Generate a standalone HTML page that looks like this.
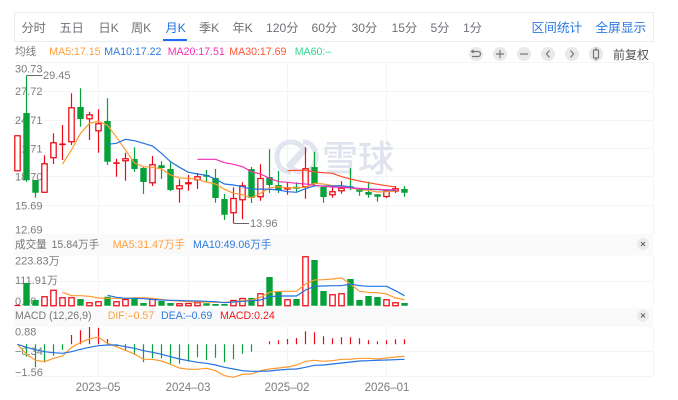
<!DOCTYPE html>
<html><head><meta charset="utf-8"><style>
html,body{margin:0;padding:0;background:#fff;width:678px;height:400px;overflow:hidden}
svg{display:block}
text{font-family:"Liberation Sans","Noto Sans CJK SC",sans-serif}
</style></head><body>
<svg width="678" height="400" viewBox="0 0 678 400" xmlns="http://www.w3.org/2000/svg">
<rect x="14.5" y="12.5" width="639" height="29" fill="#fff" stroke="#e9ebf0"/>
<g font-size="12.2" fill="#6e7176">
<text x="21.5" y="32">分时</text><text x="59.5" y="32">五日</text><text x="98.5" y="32">日K</text><text x="131" y="32">周K</text>
<text x="165.5" y="32" fill="#2272e0">月K</text><text x="199" y="32">季K</text><text x="232.5" y="32">年K</text>
<text x="266" y="32">120分</text><text x="311.5" y="32">60分</text><text x="351.5" y="32">30分</text><text x="391.5" y="32">15分</text><text x="430.5" y="32">5分</text><text x="463" y="32">1分</text>
</g>
<g font-size="12.7" fill="#2b7ae0"><text x="531.5" y="32">区间统计</text><text x="595.5" y="32">全屏显示</text></g>
<rect x="163" y="39" width="24" height="2" fill="#1a6ff0"/>

<g font-size="10.6">
<text x="15" y="55" fill="#777">均线</text>
<text x="49.3" y="55" fill="#ff9f3a">MA5:17.15</text>
<text x="104.3" y="55" fill="#2b7ae0">MA10:17.22</text>
<text x="167.7" y="55" fill="#f52fb5">MA20:17.51</text>
<text x="229.3" y="55" fill="#ff5533">MA30:17.69</text>
<text x="294.7" y="55" fill="#2fd690">MA60:–</text>
</g>
<g fill="#e9e9e9"><circle cx="476" cy="54" r="7"/><circle cx="500" cy="54" r="7"/><circle cx="524" cy="54" r="7"/><circle cx="548" cy="54" r="7"/><circle cx="572" cy="54" r="7"/><ellipse cx="596" cy="54" rx="7" ry="7.5"/></g>
<g fill="none" stroke="#777" stroke-width="1.2">
<path d="M472 51.5h6a2.5 2.5 0 0 1 0 5h-6"/><path d="M473.5 50l-2 1.5 2 1.5"/>
<path d="M496 54h8M500 50v8"/><path d="M520 54h8"/><path d="M549.5 50.5l-3 3.5 3 3.5"/><path d="M570.5 50.5l3 3.5-3 3.5"/>
<rect x="593.5" y="50" width="5" height="8" rx=".5"/><path d="M596 47.5v2.5M596 58v2.5"/>
</g>
<text x="613" y="59" font-size="12" fill="#555">前复权</text>

<!-- grid -->
<rect x="14" y="234" width="639" height="21.5" fill="#fafafa"/>
<rect x="14" y="308" width="639" height="19" fill="#fafafa"/>
<g stroke="#f3f4f6" fill="none">
<path d="M14 62.5H653M14 91.5H653M14 120.5H653M14 148.5H653M14 176.5H653M14 205.5H653"/>
<path d="M14 281.5H653M14 351.5H653M14 376.5H653"/>
<path d="M98.5 62V234M188.5 62V234M287.5 62V234M386.5 62V234M653.5 62V234"/>
<path d="M98.5 256V306M188.5 256V306M287.5 256V306M386.5 256V306M653.5 256V306"/>
<path d="M98.5 327V376M188.5 327V376M287.5 327V376M386.5 327V376M653.5 327V376"/>
</g>

<!-- watermark -->
<g fill="none" stroke="#e1e5ef" stroke-width="5">
<path d="M291 172c-8 0-14-6-14-15s6-15 14-15c7 0 11 4 14 8l-14 16"/>
<path d="M303 142c8 0 13 6 13 15s-6 15-14 15c-6 0-10-3-13-7l14-15"/>
</g>
<text x="322" y="171" font-size="36" font-weight="500" fill="#dfe3ee">雪球</text>

<!-- axis labels -->
<g font-size="11" fill="#7c7c7c">
<text x="15" y="72.5">30.73</text><text x="15" y="95">27.72</text><text x="15" y="124">24.71</text><text x="15" y="152.7">21.71</text><text x="15" y="180.7">18.70</text><text x="15" y="209.3">15.69</text><text x="15" y="233.7">12.69</text>
<text x="15" y="264.7">223.83万</text><text x="15" y="284">111.91万</text><text x="15" y="305">0.00</text>
<text x="15" y="335.7">0.88</text><text x="15" y="355">−0.34</text><text x="15" y="376">−1.56</text>
</g>

<!-- wicks -->
<path fill="none" stroke="#07a13a" stroke-width="1.2" d="M26.5 75.7V181.7M35.5 180V197.7M80.5 88.3V126.7M107.5 98.3V165M134.5 147.3V171.7M143.5 167V194M161.5 161.3V179M170.5 162.3V191M206.5 170V182M215.5 169V202.7M224.5 194V220M251.5 167V203M269.5 149.3V193M278.5 171V193M296.5 182.3V192M314.5 151.7V186.7M323.5 187V202.7M350.5 168.3V190M359.5 189V195.7M368.5 181.7V197.7M377.5 194V201.7M404.5 186V196.7"/>
<path fill="none" stroke="#ee0a14" stroke-width="1.2" d="M44.5 155.3V193M53.5 133.3V164M62.5 125V160M71.5 93.3V145M89.5 111.7V140M98.5 109.3V152.7M116.5 158.7V176.7M125.5 152.7V180.7M152.5 156V186M179.5 179.3V202.7M188.5 175V190.7M197.5 173V189M233.5 187.3V223.3M242.5 182.3V219.3M260.5 164.3V200.7M287.5 182.3V194.7M305.5 147.3V198.7M332.5 186.7V197.7M341.5 181.3V193.7M386.5 190V198M395.5 186V193"/>
<!-- green bodies -->
<path fill="#07a13a" d="M23.3 113h6.4v67h-6.4zM32.3 180h6.4v12.7h-6.4zM77.3 107h6.4v12h-6.4zM104.3 121h6.4v40.7h-6.4zM131.3 159h6.4v10h-6.4zM140.3 168h6.4v14h-6.4zM158.3 165.3h6.4v2.7h-6.4zM167.3 169h6.4v21h-6.4zM203.3 175h6.4v1.7h-6.4zM212.3 178h6.4v20h-6.4zM221.3 199h6.4v15.7h-6.4zM248.3 169h6.4v29h-6.4zM266.3 177h6.4v8h-6.4zM275.3 185h6.4v5h-6.4zM293.3 186.7h6.4v2h-6.4zM311.3 167h6.4v17h-6.4zM320.3 187h6.4v10h-6.4zM347.3 186.3h6.4v2h-6.4zM356.3 189.3h6.4v2.4h-6.4zM365.3 192h6.4v2.7h-6.4zM374.3 194.3h6.4v2.4h-6.4zM401.3 189h6.4v3.7h-6.4z"/>
<!-- red bodies -->
<path fill="#fff" stroke="#ee0a14" stroke-width="1.25" d="M14.8 135.8h5.4v35h-5.4zM41.8 163.8h5.4v28.4h-5.4zM50.8 142.8h5.4v15h-5.4zM68.8 107.8h5.4v34h-5.4zM86.8 114.8h5.4v4h-5.4zM95.8 123.8h5.4v7h-5.4zM122.8 158.8h5.4v2h-5.4zM149.8 164.8h5.4v18h-5.4zM176.8 185.8h5.4v3h-5.4zM185.8 182.8h5.4v1h-5.4zM194.8 176.8h5.4v3h-5.4zM230.8 198.5h5.4v14.3h-5.4zM239.8 185.8h5.4v14h-5.4zM257.8 178.5h5.4v18.3h-5.4zM284.8 188h5.4v1h-5.4zM302.8 168.8h5.4v18h-5.4zM329.8 191.8h5.4v3h-5.4zM338.8 188.2h5.4v2.6h-5.4zM383.8 191.2h5.4v5.3h-5.4zM392.8 188.8h5.4v2.2h-5.4z"/>
<path fill="#ee0a14" d="M59.3 143.5h6.4v1.6h-6.4zM113.3 162.3h6.4v1.6h-6.4z"/>

<!-- MAs -->
<g fill="none" stroke-width="1.2">
<polyline stroke="#ff9a2e" points="62.5,164 71.5,150 80.5,133.3 89.5,123.3 98.5,121.3 107.5,125.3 116.5,137.3 125.5,150 134.5,163 143.5,166.7 152.5,167.3 161.5,169 170.5,175 179.5,178 188.5,178.3 197.5,179.3 206.5,182 215.5,184 224.5,189.3 233.5,193.3 242.5,194.7 251.5,198 260.5,193.3 269.5,188 278.5,186.7 287.5,188 296.5,187.7 305.5,187.3 314.5,183.3 323.5,184 332.5,185.7 341.5,186 350.5,187.7 359.5,189.7 368.5,190.3 377.5,192 386.5,191.7 395.5,191"/>
<polyline stroke="#2272e0" points="107.5,144.3 116.5,143.3 125.5,139.3 134.5,140.7 143.5,143.3 152.5,146 161.5,153.3 170.5,161.7 179.5,167.3 188.5,172.3 197.5,174 206.5,175.3 215.5,179 224.5,184 233.5,185 242.5,186.7 251.5,189.3 260.5,189 269.5,189.3 278.5,190 287.5,191.7 296.5,192.3 305.5,188.7 314.5,185.7 323.5,186 332.5,186 341.5,185.7 350.5,187 359.5,189 368.5,189.3 377.5,189.7 386.5,190 395.5,190.7"/>
<polyline stroke="#f52fb5" points="197.5,159.3 206.5,159.3 215.5,159.3 224.5,162.7 233.5,164.3 242.5,166.7 251.5,171.7 260.5,174 269.5,178.3 278.5,181.7 287.5,182.3 296.5,183.3 305.5,184 314.5,185.3 323.5,186.3 332.5,187 341.5,187.3 350.5,188 359.5,188.3 368.5,189 377.5,189.3 386.5,189.7 395.5,190"/>
<polyline stroke="#ff4d2e" points="287.5,170.7 296.5,170.3 305.5,170.3 314.5,172 323.5,172.7 332.5,173.3 341.5,176.7 350.5,179 359.5,181 368.5,182.7 377.5,184.3 386.5,185.7 395.5,187"/>
</g>

<!-- high/low markers -->
<path fill="none" stroke="#666" d="M26.5 75.5H42.5M233.5 223.5H249"/>
<text x="43" y="79" font-size="11" fill="#7c7c7c">29.45</text>
<text x="250" y="227" font-size="11" fill="#7c7c7c">13.96</text>

<!-- legend 2 -->
<g font-size="10.6">
<text x="15" y="248" fill="#777">成交量</text><text x="51.5" y="248" fill="#777">15.84万手</text>
<text x="112.7" y="248" fill="#ff9f3a">MA5:31.47万手</text><text x="193" y="248" fill="#2b7ae0">MA10:49.06万手</text>
<text x="15" y="319" fill="#777">MACD (12,26,9)</text><text x="107.7" y="319" fill="#ff9f3a">DIF:–0.57</text><text x="161" y="319" fill="#2b7ae0">DEA:–0.69</text><text x="220" y="319" fill="#f01818">MACD:0.24</text>
</g>
<g fill="#ececec"><circle cx="643" cy="244" r="6"/><circle cx="643" cy="315.5" r="6"/></g>
<path stroke="#666" fill="none" d="M641 242l4 4M645 242l-4 4M641 313.5l4 4M645 313.5l-4 4"/>

<!-- volume -->
<path fill="#07a13a" d="M23.3 283h6.4v22.7h-6.4zM32.3 300h6.4v5.7h-6.4zM77.3 299h6.4v6.7h-6.4zM104.3 296.7h6.4v9h-6.4zM131.3 298.3h6.4v7.4h-6.4zM140.3 303h6.4v2.7h-6.4zM158.3 301h6.4v4.7h-6.4zM167.3 303h6.4v2.7h-6.4zM203.3 303.3h6.4v2.4h-6.4zM212.3 304h6.4v1.7h-6.4zM221.3 304h6.4v1.7h-6.4zM248.3 298h6.4v7.7h-6.4zM266.3 277h6.4v28.7h-6.4zM275.3 291.7h6.4v14h-6.4zM293.3 299h6.4v6.7h-6.4zM311.3 260h6.4v45.7h-6.4zM320.3 291h6.4v14.7h-6.4zM347.3 279h6.4v26.7h-6.4zM356.3 300h6.4v5.7h-6.4zM365.3 296h6.4v9.7h-6.4zM374.3 297h6.4v8.7h-6.4zM401.3 303h6.4v2.7h-6.4z"/>
<path fill="none" stroke="#ee0a14" stroke-width="1.25" d="M14.5 305.5h6M41.8 296.8h5.4v8.9h-5.4zM50.8 290.2h5.4v15.5h-5.4zM59.8 297.8h5.4v7.9h-5.4zM68.8 297.8h5.4v7.9h-5.4zM86.8 302.8h5.4v2.9h-5.4zM95.8 301.8h5.4v3.9h-5.4zM113.8 301.8h5.4v3.9h-5.4zM122.8 299.5h5.4v6.2h-5.4zM149.8 298.8h5.4v6.9h-5.4zM176.8 303.8h5.4v1.9h-5.4zM185.8 303.5h5.4v2.2h-5.4zM194.8 302.8h5.4v2.9h-5.4zM230.8 300.5h5.4v5.2h-5.4zM239.8 298.5h5.4v7.2h-5.4zM257.8 293.8h5.4v11.9h-5.4zM284.8 299.8h5.4v5.9h-5.4zM302.8 256.8h5.4v48.9h-5.4zM329.8 294.8h5.4v10.9h-5.4zM338.8 293.8h5.4v11.9h-5.4zM383.8 299.8h5.4v5.9h-5.4zM392.8 302.8h5.4v2.9h-5.4z"/>
<g fill="none" stroke-width="1.2">
<polyline stroke="#ff9a2e" points="62.5,292.3 71.5,295.7 80.5,295.7 89.5,296.3 98.5,298 107.5,298.3 116.5,298.3 125.5,298.3 134.5,297.7 143.5,297.7 152.5,298.3 161.5,299.5 170.5,300.5 179.5,301 188.5,301.5 197.5,302 206.5,302 215.5,302.3 224.5,302.3 233.5,301.7 242.5,300.7 251.5,300 260.5,297.3 269.5,292.3 278.5,291.3 287.5,291.3 296.5,291.3 305.5,284 314.5,280 323.5,279.7 332.5,279 341.5,278 350.5,284 359.5,291.3 368.5,292.3 377.5,292.7 386.5,294 395.5,298 404.5,299.7"/>
<polyline stroke="#2272e0" points="107.5,295.3 116.5,297.3 125.5,298.3 134.5,298.3 143.5,298.7 152.5,299.5 161.5,300 170.5,300.3 179.5,300.5 188.5,300.8 197.5,301 206.5,301.3 215.5,301.7 224.5,302.7 233.5,302 242.5,301.3 251.5,300.7 260.5,300 269.5,296.7 278.5,296 287.5,296 296.5,296 305.5,290 314.5,286.3 323.5,286 332.5,285.7 341.5,285.7 350.5,284 359.5,285.7 368.5,286.3 377.5,286.3 386.5,286.3 395.5,290.7 404.5,295.7"/>
</g>

<!-- MACD -->
<path fill="none" stroke="#07a13a" stroke-width="1.2" d="M26.5 344.3V356.7M35.5 344.3V367.3M44.5 344.3V362.3M53.5 344.3V355.7M62.5 344.3V350M116.5 344.3V346.7M125.5 344.3V350.7M134.5 344.3V355M143.5 344.3V362.3M152.5 344.3V358.3M161.5 344.3V358.3M170.5 344.3V364.3M179.5 344.3V363.7M188.5 344.3V361.7M197.5 344.3V357.3M206.5 344.3V360M215.5 344.3V357.7M224.5 344.3V362.3M233.5 344.3V359.3M242.5 344.3V353.7M251.5 344.3V351.7"/>
<path fill="none" stroke="#ee0a14" stroke-width="1.2" d="M71.5 344.3V335M80.5 344.3V330.3M89.5 344.3V327M98.5 344.3V327.7M107.5 344.3V339M269.5 344.3V341.3M278.5 344.3V340.3M287.5 344.3V339M296.5 344.3V338M305.5 344.3V331.3M314.5 344.3V332.3M323.5 344.3V336.3M332.5 344.3V338.3M341.5 344.3V337.3M350.5 344.3V337.3M359.5 344.3V338.3M368.5 344.3V340.3M377.5 344.3V341.3M386.5 344.3V340.3M395.5 344.3V339.3M404.5 344.3V339.3"/>
<g fill="none" stroke-width="1.2">
<polyline stroke="#ff9a2e" points="17.5,344.3 26.5,354.3 35.5,360.3 44.5,361.7 53.5,358.3 62.5,356 71.5,347.3 80.5,342.7 89.5,338.7 98.5,337.3 107.5,343.3 116.5,346.7 125.5,350.3 134.5,354 143.5,359.3 152.5,359.3 161.5,361 170.5,364.3 179.5,368 188.5,369.3 197.5,369.3 206.5,368.3 215.5,370.7 224.5,375.7 233.5,377.3 242.5,374.3 251.5,374 260.5,370.7 269.5,369 278.5,368 287.5,367 296.5,365 305.5,361.3 314.5,360.3 323.5,361.3 332.5,360.7 341.5,359.3 350.5,359.3 359.5,358.3 368.5,358.3 377.5,359 386.5,358 395.5,357 404.5,356.3"/>
<polyline stroke="#2272e0" points="17.5,344.3 26.5,347.3 35.5,349.7 44.5,351.7 53.5,352.7 62.5,353.3 71.5,351.7 80.5,349.3 89.5,347.3 98.5,345.7 107.5,345 116.5,345 125.5,346.7 134.5,348.3 143.5,350.7 152.5,352.3 161.5,354.3 170.5,356.7 179.5,359 188.5,360.7 197.5,362.3 206.5,363.3 215.5,365 224.5,367.3 233.5,369 242.5,370.7 251.5,371.3 260.5,371.3 269.5,371 278.5,370 287.5,369.3 296.5,369 305.5,367.3 314.5,365.3 323.5,365 332.5,364 341.5,363 350.5,362 359.5,361 368.5,360.7 377.5,360.3 386.5,360 395.5,359.7 404.5,359.3"/>
</g>
<g font-size="11.5" fill="#7c7c7c" text-anchor="middle">
<text x="98" y="391">2023–05</text><text x="188" y="391">2024–03</text><text x="287" y="391">2025–02</text><text x="387" y="391">2026–01</text>
</g>
</svg>
</body></html>
